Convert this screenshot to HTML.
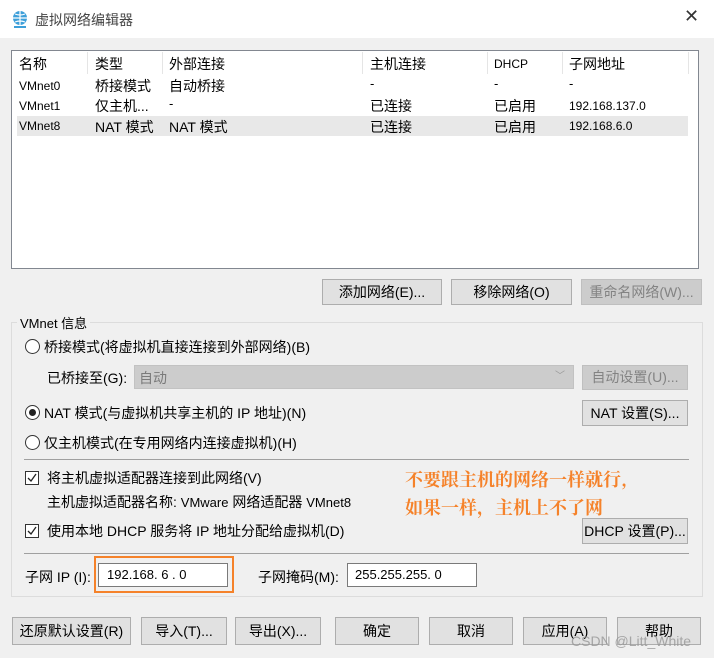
<!DOCTYPE html>
<html><head><meta charset="utf-8"><style>
*{box-sizing:border-box;margin:0;padding:0}
body{width:714px;height:658px;background:#f0f0f0;font-family:"Liberation Sans","Noto Sans CJK SC",sans-serif;font-size:13px;color:#000;position:relative;overflow:hidden}
.a{position:absolute;white-space:nowrap}
.btn{position:absolute;background:#e1e1e1;border:1px solid #adadad;text-align:center;font-size:13px}
.dis{background:#ccc;border-color:#bfbfbf;color:#838383}
.radio{position:absolute;width:15px;height:15px;border:1px solid #333;border-radius:50%;background:#fff}
.cb{position:absolute;width:14px;height:14px;border:1px solid #333;background:#fff}
.sep{position:absolute;width:1px;background:#e5e5e5;top:52px;height:22px}
.in{position:absolute;background:#fff;border:1px solid #7a7a7a;font-size:13px;padding-left:8px}
</style></head><body>
<div class="a" style="left:0;top:0;width:714px;height:38px;background:#fff"></div>
<svg class="a" style="left:11px;top:10px" width="18" height="20" viewBox="0 0 18 20"><circle cx="9" cy="8" r="7" fill="#3d9fd9"/><path d="M2 8h14M9 1v14M4 4q5 2 10 0M4 12q5-2 10 0" stroke="#fff" stroke-width="1.2" fill="none"/><rect x="3" y="16" width="12" height="2" fill="#3d9fd9"/></svg>
<div class="a" style="left:35px;top:10px;font-size:14px;color:#444">虚拟网络编辑器</div>
<div class="a" style="left:684px;top:6px;font-size:18px;color:#333">✕</div>

<div class="a" style="left:11px;top:50px;width:688px;height:219px;background:#fff;border:1px solid #828790"></div>
<div class="sep" style="left:87px"></div><div class="sep" style="left:162px"></div><div class="sep" style="left:362px"></div><div class="sep" style="left:487px"></div><div class="sep" style="left:562px"></div><div class="sep" style="left:688px"></div>
<div class="a" style="left:17px;top:116px;width:671px;height:20px;background:#e8e8e8"></div>
<div class="a" style="left:19px;top:54px;font-size:14px">名称</div>
<div class="a" style="left:95px;top:54px;font-size:14px">类型</div>
<div class="a" style="left:169px;top:54px;font-size:14px">外部连接</div>
<div class="a" style="left:370px;top:54px;font-size:14px">主机连接</div>
<div class="a" style="left:494px;top:57px;font-size:12px">DHCP</div>
<div class="a" style="left:569px;top:54px;font-size:14px">子网地址</div>

<div class="a" style="left:19px;top:79px;font-size:12px">VMnet0</div><div class="a" style="left:95px;top:76px;font-size:14px">桥接模式</div><div class="a" style="left:169px;top:76px;font-size:14px">自动桥接</div><div class="a" style="left:370px;top:76px">-</div><div class="a" style="left:494px;top:76px">-</div><div class="a" style="left:569px;top:76px">-</div>
<div class="a" style="left:19px;top:99px;font-size:12px">VMnet1</div><div class="a" style="left:95px;top:96px;font-size:14px">仅主机...</div><div class="a" style="left:169px;top:96px">-</div><div class="a" style="left:370px;top:96px;font-size:14px">已连接</div><div class="a" style="left:494px;top:96px;font-size:14px">已启用</div><div class="a" style="left:569px;top:99px;font-size:12px">192.168.137.0</div>
<div class="a" style="left:19px;top:119px;font-size:12px">VMnet8</div><div class="a" style="left:95px;top:117px;font-size:14px">NAT 模式</div><div class="a" style="left:169px;top:117px;font-size:14px">NAT 模式</div><div class="a" style="left:370px;top:117px;font-size:14px">已连接</div><div class="a" style="left:494px;top:117px;font-size:14px">已启用</div><div class="a" style="left:569px;top:119px;font-size:12px">192.168.6.0</div>

<div class="btn" style="left:322px;top:279px;width:120px;height:26px;line-height:24px;font-size:14px">添加网络(E)...</div>
<div class="btn" style="left:451px;top:279px;width:121px;height:26px;line-height:24px;font-size:14px">移除网络(O)</div>
<div class="btn dis" style="left:581px;top:279px;width:121px;height:26px;line-height:24px;font-size:14px">重命名网络(W)...</div>

<div class="a" style="left:11px;top:322px;width:692px;height:275px;border:1px solid #dcdcdc"></div>
<div class="a" style="left:17px;top:313px;background:#f0f0f0;padding:0 3px;font-size:13px">VMnet 信息</div>

<div class="radio" style="left:25px;top:339px"></div><div class="a" style="left:44px;top:337px;font-size:14px">桥接模式(将虚拟机直接连接到外部网络)(B)</div>
<div class="a" style="left:47px;top:368px;font-size:14px">已桥接至(G):</div>
<div class="a" style="left:134px;top:365px;width:440px;height:24px;background:#ccc;border:1px solid #c2c2c2;color:#7a7a7a;font-size:14px;padding:2px 4px">自动<span style="position:absolute;right:8px;top:1px;font-size:10px;color:#999">﹀</span></div>
<div class="btn dis" style="left:582px;top:365px;width:106px;height:25px;line-height:23px;font-size:14px">自动设置(U)...</div>
<div class="radio" style="left:25px;top:405px"><div style="position:absolute;left:3px;top:3px;width:7px;height:7px;border-radius:50%;background:#222"></div></div><div class="a" style="left:44px;top:403px;font-size:14px">NAT 模式(与虚拟机共享主机的 IP 地址)(N)</div>
<div class="btn" style="left:582px;top:400px;width:106px;height:26px;line-height:24px;font-size:14px">NAT 设置(S)...</div>
<div class="radio" style="left:25px;top:435px"></div><div class="a" style="left:44px;top:433px;font-size:14px">仅主机模式(在专用网络内连接虚拟机)(H)</div>
<div class="a" style="left:24px;top:459px;width:665px;height:1px;background:#a0a0a0"></div>
<div class="cb" style="left:25px;top:471px"><svg width="12" height="12" style="position:absolute;left:0;top:0"><path d="M2 6l3 3 5-7" stroke="#222" stroke-width="1.3" fill="none"/></svg></div><div class="a" style="left:47px;top:468px;font-size:14px">将主机虚拟适配器连接到此网络(V)</div>
<div class="a" style="left:47px;top:492px;font-size:14px">主机虚拟适配器名称: <span style="font-size:13px">VMware</span> 网络适配器 <span style="font-size:13px">VMnet8</span></div>
<div class="cb" style="left:25px;top:524px"><svg width="12" height="12" style="position:absolute;left:0;top:0"><path d="M2 6l3 3 5-7" stroke="#222" stroke-width="1.3" fill="none"/></svg></div><div class="a" style="left:47px;top:521px;font-size:14px">使用本地 DHCP 服务将 IP 地址分配给虚拟机(D)</div>
<div class="btn" style="left:582px;top:518px;width:106px;height:26px;line-height:24px;font-size:14px">DHCP 设置(P)...</div>
<div class="a" style="left:24px;top:553px;width:665px;height:1px;background:#a0a0a0"></div>
<div class="a" style="left:405px;top:465px;font-size:18px;font-weight:bold;color:#f5822a;font-family:'Noto Serif CJK SC',serif;line-height:28px">不要跟主机的网络一样就行,<br>如果一样，主机上不了网</div>

<div class="a" style="left:25px;top:567px;font-size:14px">子网 IP (I):</div>
<div class="a" style="left:94px;top:556px;width:140px;height:37px;border:2px solid #f5822a"></div>
<div class="in" style="left:98px;top:563px;width:130px;height:24px;line-height:22px">192.168. 6 . 0</div>
<div class="a" style="left:258px;top:567px;font-size:14px">子网掩码(M):</div>
<div class="in" style="left:347px;top:563px;width:130px;height:24px;line-height:22px;padding-left:7px">255.255.255. 0</div>

<div class="btn" style="left:12px;top:617px;width:119px;height:28px;line-height:26px;font-size:14px">还原默认设置(R)</div>
<div class="btn" style="left:141px;top:617px;width:86px;height:28px;line-height:26px;font-size:14px">导入(T)...</div>
<div class="btn" style="left:235px;top:617px;width:86px;height:28px;line-height:26px;font-size:14px">导出(X)...</div>
<div class="btn" style="left:335px;top:617px;width:84px;height:28px;line-height:26px;font-size:14px">确定</div>
<div class="btn" style="left:429px;top:617px;width:84px;height:28px;line-height:26px;font-size:14px">取消</div>
<div class="btn" style="left:523px;top:617px;width:84px;height:28px;line-height:26px;font-size:14px">应用(A)</div>
<div class="btn" style="left:617px;top:617px;width:84px;height:28px;line-height:26px;font-size:14px">帮助</div>
<div class="a" style="left:571px;top:633px;font-size:14px;color:rgba(150,150,150,0.8)">CSDN @Litt_White</div>
</body></html>
